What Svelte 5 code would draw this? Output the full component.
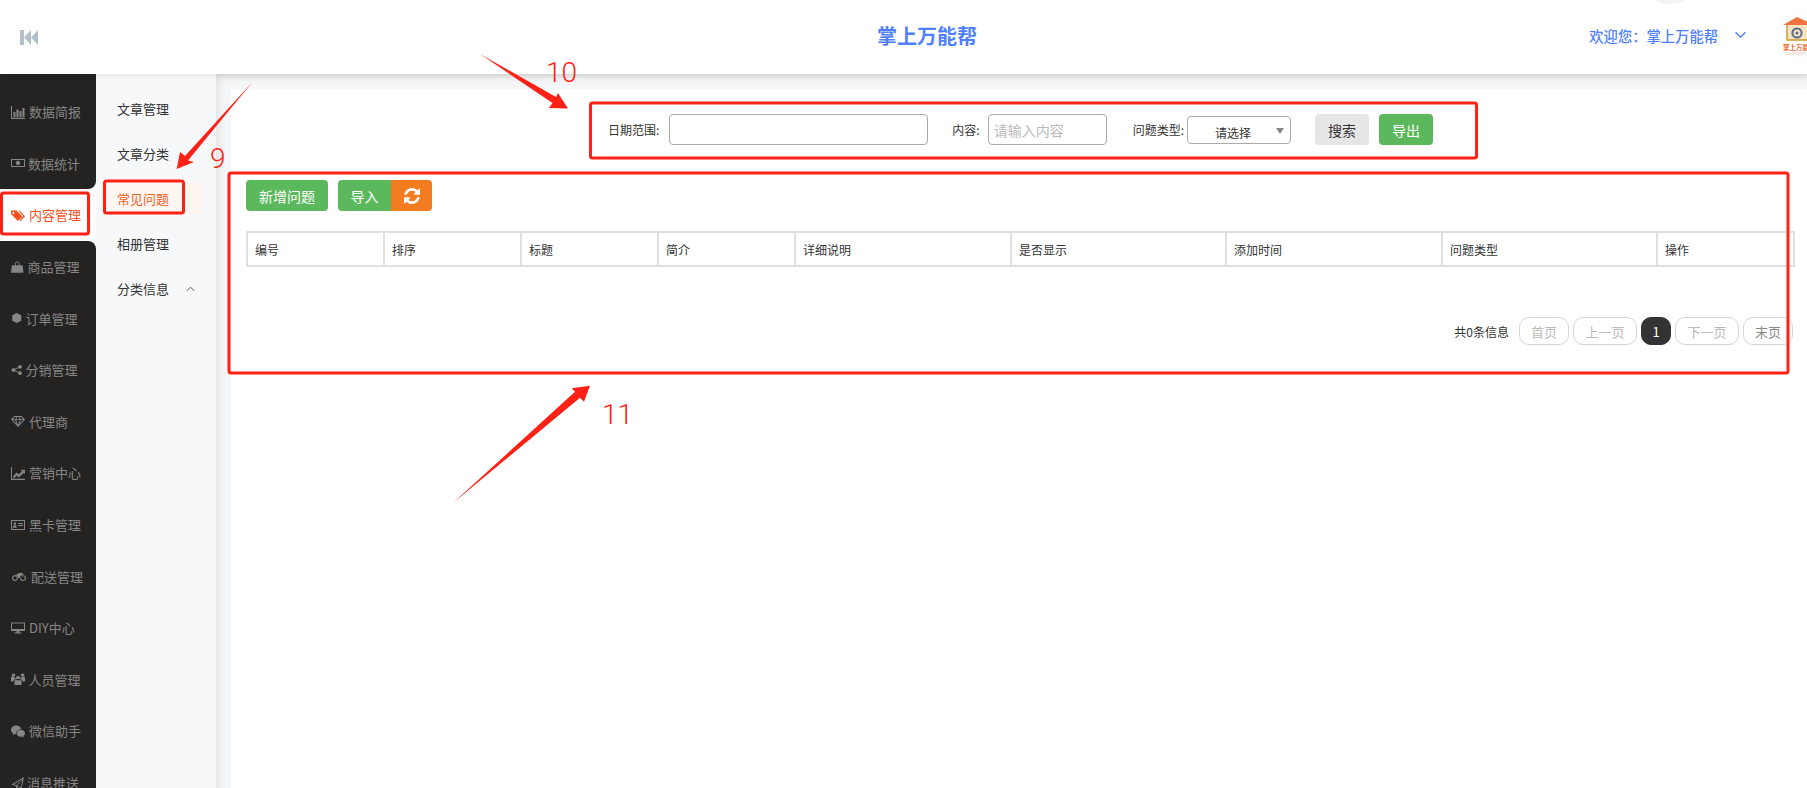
<script>
  const menu = [
    { name: '数据简报', w: 14, gap: 4, d: 'M0 1h1v11.8h13V14H0z M2.5 7h2v5h-2z M5.500 4.500h2V12h-2z M8.500 6h2v6h-2z M11.500 3h2v9h-2z' },
    { name: '数据统计', w: 14, gap: 3, d: 'M0 3h14v8H0z M1 4v6h12V4z M7 4.8a2.2 2.2 0 1 0 .01 0z' },
    { name: '内容管理', w: 14, gap: 4, d: 'M0 2.500h5.500l6 6-4.500 4.500-7-7z M2.300 4a1 1 0 1 0 .01 0z M7.500 2.500h1.200l5.300 6-4.500 4.500-.8-.8 3.600-3.700z', active: true },
    { name: '商品管理', w: 12.5, gap: 4, d: 'M1 5h12l1 8.500H0z M4.500 5V3.200a2.500 2.500 0 0 1 5 0V5h-1V3.200a1.500 1.500 0 0 0-3 0V5z' },
    { name: '订单管理', w: 11.5, gap: 3, d: 'M7 .8l5.500 3v6.400L7 13.200l-5.500-3V3.800z' },
    { name: '分销管理', w: 11.5, gap: 3, d: 'M11 .8a2.300 2.300 0 1 1-1.700 3.900L5.200 6.500a2.400 2.400 0 0 1 0 1l4.100 1.800a2.300 2.300 0 1 1-.5 1.100L4.600 8.600a2.300 2.300 0 1 1 0-3.200l4.200-1.800A2.300 2.300 0 0 1 11 .8z' },
    { name: '代理商', w: 14, gap: 4, d: 'M3.200 2h7.600L14 5.600 7 13 0 5.600z M3.700 3L1.800 5.200h2.600L5.400 3z M6.300 3L5.300 5.200h3.400L7.700 3z M8.600 3l1 2.200h2.600L10.300 3z M1.900 6.100l3.600 3.900-1.300-3.900z M5.200 6.100L7 11l1.800-4.900z M9.800 6.100L8.500 10l3.600-3.900z' },
    { name: '营销中心', w: 14, gap: 4, d: 'M0 1h1v11.800h13V14H0z M2 10.500l3.500-4 2.300 2L11 5 9.800 3.800H14v4.200l-1.200-1.200-5 4.700-2.200-2.100-2.700 3z' },
    { name: '黑卡管理', w: 14, gap: 4, d: 'M0 2h14v10H0z M1 3v8h12V3z M2 9.800V8.500c0-.8 1-1.200 1.800-1.200s1.800.4 1.800 1.200v1.300z M3.800 4.200a1.300 1.300 0 1 0 .01 0z M7 5h5v1H7z M7 7h5v1H7z' },
    { name: '配送管理', w: 16, gap: 4, d: 'M3 6a3 3 0 1 0 .01 0z M3 7.200a1.800 1.800 0 1 1-.01 0z M11 6a3 3 0 1 0 .01 0z M11 7.200a1.800 1.800 0 1 1-.01 0z M4 6l3-2h3.500l1 2-3 3H6z' },
    { name: 'DIY中心', w: 14, gap: 4, d: 'M0 1.500h14v8.500H0z M1 2.500v5.500h12V2.500z M5.500 10h3v1.500h2v1h-7v-1h2z' },
    { name: '人员管理', w: 14, gap: 3.5, d: 'M7 4a2.300 2.300 0 1 0 .01 0z M2.500 1.500a1.800 1.800 0 1 0 .01 0z M11.500 1.500a1.800 1.800 0 1 0 .01 0z M3.500 9.500c0-1.500 1.200-2.500 2-2.500h3c.8 0 2 1 2 2.500V13h-7z M0 5.500c0-.6.5-1 1-1h2.500c0 1 .4 1.800 1 2.300-1 .4-1.800 1.200-2 2.700H0z M14 5.500c0-.6-.5-1-1-1h-2.500c0 1-.4 1.800-1 2.300 1 .4 1.800 1.200 2 2.700H14z' },
    { name: '微信助手', w: 14, gap: 4, d: 'M5.200 1.500c-2.900 0-5.200 1.900-5.200 4.300 0 1.400.8 2.600 2 3.400L1.500 11l2-1c.5.1 1 .2 1.700.2 0-.2-.1-.5-.1-.7 0-2.300 2.200-4.200 4.900-4.200h.3C9.900 3.200 7.800 1.500 5.200 1.500z M14 9.200c0-1.900-1.900-3.500-4.200-3.500S5.600 7.300 5.600 9.200s1.900 3.500 4.200 3.500c.5 0 1-.1 1.400-.2l1.600.9-.4-1.400c1-.7 1.600-1.700 1.600-2.800z' },
    { name: '消息推送', w: 13, gap: 3, d: 'M14 .5L11.500 13 7.500 11.200 5.500 13.500V10.500L.5 8.500z M12 2.800L3 8.300l2.800 1.200z M12.300 3L6.600 10l4.200 1.800z' }
  ];
  const activeIndex = menu.findIndex((m) => m.active);

  const subMenu = ['文章管理', '文章分类', '常见问题', '相册管理', '分类信息'];

  const columns = [
    { name: '编号', w: 137 },
    { name: '排序', w: 137 },
    { name: '标题', w: 137 },
    { name: '简介', w: 137 },
    { name: '详细说明', w: 216 },
    { name: '是否显示', w: 215 },
    { name: '添加时间', w: 216 },
    { name: '问题类型', w: 215 },
    { name: '操作', w: 137 }
  ];
</script>

<div class="page">
  <header class="topbar">
    <svg class="fold" viewBox="0 0 18 15" aria-hidden="true">
      <path d="M0 0h4v15H0z M4 7.500L11 0v15z M11 7.500L18 0v15z" />
    </svg>
    <h1 class="brand">掌上万能帮</h1>
    <div class="welcome">欢迎您&#xFF1A;掌上万能帮</div>
    <svg class="caret" viewBox="0 0 10 7" aria-hidden="true">
      <path d="M.5 1L5 5.600 9.500 1" />
    </svg>
    <div class="avatar">
      <svg viewBox="0 0 46 46" aria-hidden="true">
        <path d="M9 12h36v15H9z" fill="#f6e3bf" />
        <path d="M9 12v15h36" fill="none" stroke="#c79a2e" stroke-width="1.400" />
        <path d="M5 12L19 4l18 8z" fill="#ee7440" />
        <circle cx="19" cy="20" r="4.600" fill="none" stroke="#5d6a86" stroke-width="2" />
        <circle cx="19" cy="20" r="1.500" fill="#5d6a86" />
        <text class="logo-name" x="5" y="37">掌上万能帮</text>
        <text class="logo-num" x="8" y="42">1234567</text>
      </svg>
    </div>
  </header>

  <div class="body">
    <nav class="sidebar">
      {#each menu as item, i}
        <a
          class="item"
          class:active={item.active}
          class:above={i === activeIndex - 1}
          class:below={i === activeIndex + 1}
          href="#/"
        >
          <svg viewBox="0 0 14 14" style="width:{item.w}px;margin-right:{item.gap}px" aria-hidden="true">
            <path fill-rule="evenodd" d={item.d} />
          </svg>
          <span>{item.name}</span>
        </a>
      {/each}
    </nav>

    <aside class="subnav">
      {#each subMenu as label, i}
        <a class="sub" class:current={i === 2} href="#/">
          {label}
          {#if i === 4}
            <svg viewBox="0 0 10 6" aria-hidden="true"><path d="M1 5l4-4 4 4" /></svg>
          {/if}
        </a>
      {/each}
    </aside>

    <main class="content">
      <section class="card">
        <form class="filters" onsubmit={(e) => e.preventDefault()}>
          <label class="f-date">日期范围:<input class="date" type="text" /></label>
          <label class="f-text">内容:<input class="text" type="text" placeholder="请输入内容" /></label>
          <div class="f-type">
            <span>问题类型:</span>
            <div class="select">请选择<i></i></div>
          </div>
          <button class="btn grey" type="button">搜索</button>
          <button class="btn green" type="button">导出</button>
        </form>

        <div class="toolbar">
          <button class="btn green add" type="button">新增问题</button>
          <div class="group">
            <button class="btn green" type="button">导入</button>
            <button class="btn orange" type="button" aria-label="刷新">
              <svg viewBox="0 0 1536 1536" aria-hidden="true">
                <path d="M1511 928q0 5-1 7-64 268-268 434.500t-478 166.500q-146 0-282.500-55t-243.500-157l-129 129q-19 19-45 19t-45-19-19-45v-448q0-26 19-45t45-19h448q26 0 45 19t19 45-19 45l-137 137q71 66 161 102t187 36q134 0 250-65t186-179q11-17 53-117 8-23 30-23h192q13 0 22.500 9.500t9.500 22.500zm25-800v448q0 26-19 45t-45 19h-448q-26 0-45-19t-19-45 19-45l138-138q-148-137-349-137-134 0-250 65t-186 179q-11 17-53 117-8 23-30 23h-199q-13 0-22.500-9.500t-9.500-22.500v-7q65-268 270-434.500t480-166.500q146 0 284 55.500t245 156.500l130-129q19-19 45-19t45 19 19 45z" />
              </svg>
            </button>
          </div>
        </div>

        <table>
          <colgroup>
            {#each columns as col}
              <col style="width:{col.w}px" />
            {/each}
          </colgroup>
          <thead>
            <tr>
              {#each columns as col}
                <th>{col.name}</th>
              {/each}
            </tr>
          </thead>
        </table>

        <div class="pager">
          <span class="total">共0条信息</span>
          <button class="pg w2" type="button">首页</button>
          <button class="pg w3" type="button">上一页</button>
          <button class="pg now" type="button">1</button>
          <button class="pg w3" type="button">下一页</button>
          <button class="pg w2 last" type="button">末页</button>
        </div>
      </section>
    </main>
  </div>

  <!-- 标注层 -->
  <svg class="notes" viewBox="0 0 1807 788" aria-hidden="true">
    <rect x="1.500" y="193" width="87" height="41" rx="2" />
    <rect x="104.500" y="181" width="79" height="32" rx="2" />
    <rect x="590.500" y="103" width="886" height="55" rx="2" />
    <rect x="229" y="173" width="1559" height="200" rx="2" />
    <polygon points="252.500,82 188,160.500 194,162 176.700,169 180,152 185,156" />
    <polygon points="480,54 556,97 558,93 568,108.500 549,108 552.500,103" />
    <polygon points="452.700,503.300 575,391.700 571.700,388.300 590,385.700 584,401.700 580,397.700" />
    <text x="210" y="168">9</text>
    <text x="546" y="82">10</text>
    <text x="602" y="424">11</text>
  </svg>
</div>

<style>
  :global(body) {
    margin: 0;
    font-family: 'Noto Sans CJK SC', 'Noto Sans', sans-serif;
    color: #333;
    background: #fff;
    overflow: hidden;
  }
  .page {
    position: relative;
    width: 1807px;
    height: 788px;
    overflow: hidden;
  }
  .topbar {
    position: relative;
    z-index: 2;
    display: flex;
    align-items: center;
    height: 74px;
    padding-left: 20px;
    box-sizing: border-box;
    background: #fff;
    box-shadow: 0 1px 6px rgba(0, 0, 0, 0.1);
    color: #4f80ff;
  }
  /* 头像后面露出的一点圆弧 */
  .topbar::before {
    content: '';
    position: absolute;
    left: 1650px;
    top: -16px;
    width: 40px;
    height: 20px;
    border-radius: 50%;
    background: #f4f4f4;
  }
  .fold {
    width: 18px;
    height: 15px;
    flex: none;
    fill: #b4bfcc;
  }
  .brand {
    margin: 0 0 2px 839px;
    font-size: 20px;
    line-height: 28px;
    font-weight: 700;
  }
  .welcome {
    margin-left: auto;
    font-size: 14.300px;
    font-weight: 500;
    line-height: 20px;
    margin-bottom: 2px;
  }
  .caret {
    width: 11px;
    height: 8px;
    margin: 0 0 4px 17px;
    fill: none;
    stroke: #4f80ff;
    stroke-width: 1.300;
  }
  .avatar {
    flex: none;
    width: 46px;
    height: 46px;
    margin: -2px -17px 0 32px;
    border-radius: 50%;
    background: #fff;
    box-shadow: 0 0 2px rgba(0, 0, 0, 0.08);
  }
  .avatar svg {
    display: block;
    width: 46px;
    height: 46px;
  }
  .logo-name {
    font-size: 6.500px;
    font-weight: 700;
    fill: #ec6a2f;
  }
  .logo-num {
    font-size: 3.500px;
    letter-spacing: 1px;
    fill: #f0a27c;
  }

  .body {
    display: flex;
    height: 714px;
  }
  .sidebar {
    flex: none;
    width: 96px;
    height: 714px;
    overflow: hidden;
    background: #fff;
    display: flex;
    flex-direction: column;
  }
  .sidebar::before {
    content: '';
    flex: none;
    height: 12px;
    background: #242322;
  }
  .item {
    flex: none;
    height: 51.600px;
    display: flex;
    align-items: center;
    padding-left: 11px;
    box-sizing: border-box;
    background: #242322;
    color: #868686;
    font-size: 13px;
    text-decoration: none;
    white-space: nowrap;
  }
  .item svg {
    height: 14px;
    flex: none;
    fill: #868686;
  }
  .item.active {
    background: #fff;
    color: #f4511e;
  }
  .item.active svg {
    fill: #f4511e;
  }
  .item.above {
    border-bottom-right-radius: 8px;
  }
  .item.below {
    border-top-right-radius: 8px;
  }

  .subnav {
    flex: none;
    width: 120px;
    box-sizing: border-box;
    padding: 19px 12px 0;
    background: #f7f8fa;
    display: flex;
    flex-direction: column;
    gap: 14px;
  }
  .sub {
    display: flex;
    align-items: center;
    height: 31px;
    padding-left: 9px;
    border-radius: 5px;
    font-size: 13px;
    color: #333;
    text-decoration: none;
  }
  .sub svg {
    width: 9px;
    height: 6px;
    margin-left: 17px;
    fill: none;
    stroke: #555;
    stroke-width: 1.100;
  }
  .sub.current {
    background: #fff5f1;
    color: #f4621f;
  }

  .content {
    flex: 1;
    padding: 15px 0 0 15px;
    background: #f6f7f9;
    box-shadow: inset 7px 8px 9px -5px rgba(0, 0, 0, 0.1);
  }
  .card {
    height: 100%;
    box-sizing: border-box;
    padding: 25px 12px 0 15px;
    background: #fff;
  }

  .filters {
    display: flex;
    align-items: center;
    height: 31px;
    padding-left: 362px;
    font-size: 12px;
  }
  .filters label,
  .f-type {
    display: flex;
    align-items: center;
    white-space: nowrap;
  }
  .filters input {
    height: 31px;
    box-sizing: border-box;
    border: 1px solid #aaa;
    border-radius: 4px;
    padding: 0 5px;
    font-family: inherit;
    font-size: 14px;
    outline: none;
  }
  .filters input::placeholder {
    color: #bbb;
  }
  .date {
    width: 259px;
    margin-left: 10px;
  }
  .text {
    width: 119px;
    margin-left: 8px;
  }
  .f-text {
    margin-left: 24px;
  }
  .f-type {
    margin-left: 26px;
  }
  .select {
    position: relative;
    width: 104px;
    height: 28px;
    margin-left: 3px;
    box-sizing: border-box;
    border: 1px solid #aaa;
    border-radius: 4px;
    padding: 3px 12px 0 0;
    line-height: 26px;
    text-align: center;
  }
  .select i {
    position: absolute;
    right: 6px;
    top: 11px;
    border: 4px solid transparent;
    border-top: 6px solid #888;
    border-bottom: 0;
  }
  .btn {
    height: 31px;
    border: 0;
    border-radius: 4px;
    padding: 0;
    width: 54px;
    font-family: inherit;
    font-size: 14px;
    cursor: pointer;
  }
  .grey {
    margin-left: 24px;
    background: #e6e6e6;
    color: #333;
  }
  .green {
    background: #5cb85c;
    color: #fff;
  }
  .grey + .green {
    margin-left: 10px;
  }

  .toolbar {
    display: flex;
    gap: 10px;
    margin-top: 35px;
  }
  .add {
    width: 82px;
  }
  .group {
    display: flex;
  }
  .group .green {
    width: 53px;
    border-radius: 4px 0 0 4px;
  }
  .orange {
    width: 41px;
    border-radius: 0 4px 4px 0;
    background: #f47c20;
    display: flex;
    align-items: center;
    justify-content: center;
  }
  .orange svg {
    width: 16px;
    height: 16px;
    fill: #fff;
  }

  table {
    width: 1547px;
    margin-top: 20px;
    table-layout: fixed;
    border-collapse: collapse;
  }
  th {
    height: 32px;
    padding: 0 0 0 7px;
    border: 2px solid #e0e0e0;
    font-size: 12px;
    font-weight: 400;
    color: #333;
    text-align: left;
  }

  .pager {
    display: flex;
    align-items: center;
    justify-content: flex-end;
    gap: 4px;
    margin-top: 50px;
    padding-right: 2px;
    font-size: 13px;
  }
  .total {
    margin-right: 6px;
    font-size: 12px;
  }
  .pg {
    height: 28px;
    padding: 0;
    border: 1px solid #d4d4d4;
    border-radius: 10px;
    background: #fff;
    color: #bbb;
    font-family: inherit;
    font-size: 13px;
  }
  .w2 {
    width: 50px;
  }
  .w3 {
    width: 64px;
  }
  .now {
    width: 30px;
    border-color: #333;
    background: #333;
    color: #fff;
  }
  .last {
    color: #888;
  }

  .notes {
    position: absolute;
    left: 0;
    top: 0;
    width: 1807px;
    height: 788px;
    z-index: 3;
    pointer-events: none;
  }
  .notes rect {
    fill: none;
    stroke: #ff2116;
    stroke-width: 3;
  }
  .notes polygon {
    fill: #ff2116;
  }
  .notes text {
    fill: #ff2116;
    font-family: Roboto, sans-serif;
    font-weight: 300;
    font-size: 28px;
  }
</style>
